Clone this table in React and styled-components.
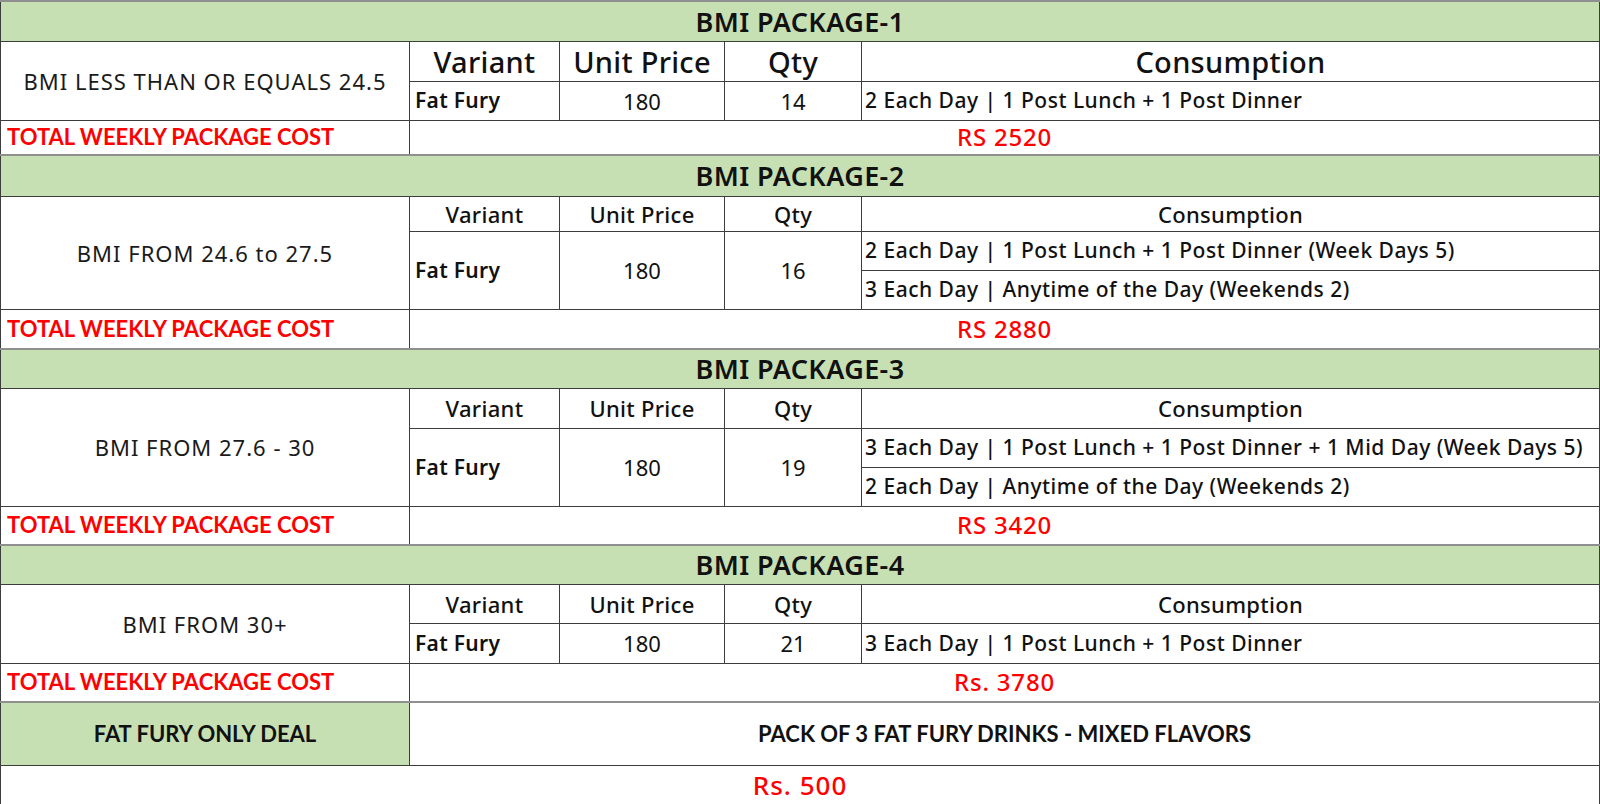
import styled, { createGlobalStyle } from "styled-components";

const GlobalStyle = createGlobalStyle`
  html, body {
    margin: 0;
    padding: 0;
    background: #fff;
  }
`;

const packages = [
  {
    title: "BMI PACKAGE-1",
    range: "BMI LESS THAN OR EQUALS 24.5",
    qty: 14,
    big: true,
    consumption: ["2 Each Day | 1 Post Lunch + 1 Post Dinner"],
    total: "RS 2520",
    heights: [40, 40, 39, 35],
  },
  {
    title: "BMI PACKAGE-2",
    range: "BMI FROM 24.6 to 27.5",
    qty: 16,
    consumption: [
      "2 Each Day | 1 Post Lunch + 1 Post Dinner (Week Days 5)",
      "3 Each Day | Anytime of the Day (Weekends 2)",
    ],
    total: "RS 2880",
    heights: [41, 35, 39, 40],
  },
  {
    title: "BMI PACKAGE-3",
    range: "BMI FROM 27.6 - 30",
    qty: 19,
    consumption: [
      "3 Each Day | 1 Post Lunch + 1 Post Dinner + 1 Mid Day (Week Days 5)",
      "2 Each Day | Anytime of the Day (Weekends 2)",
    ],
    total: "RS 3420",
    heights: [39, 40, 39, 39],
  },
  {
    title: "BMI PACKAGE-4",
    range: "BMI FROM 30+",
    qty: 21,
    consumption: ["3 Each Day | 1 Post Lunch + 1 Post Dinner"],
    total: "Rs. 3780",
    heights: [39, 39, 40, 39],
  },
];

function Package({ pkg }) {
  const [titleH, headH, rowH, totalH] = pkg.heights;
  const span = pkg.consumption.length;

  return (
    <>
      <Row $h={titleH}>
        <TitleCell colSpan={5}>{pkg.title}</TitleCell>
      </Row>
      <Row $h={headH}>
        <RangeCell rowSpan={span + 1}>{pkg.range}</RangeCell>
        <HeadCell $big={pkg.big}>Variant</HeadCell>
        <HeadCell $big={pkg.big}>Unit Price</HeadCell>
        <HeadCell $big={pkg.big}>Qty</HeadCell>
        <HeadCell $big={pkg.big}>Consumption</HeadCell>
      </Row>
      {pkg.consumption.map((line, i) => (
        <Row key={line} $h={rowH}>
          {i === 0 && (
            <>
              <VariantCell rowSpan={span}>Fat Fury</VariantCell>
              <NumberCell rowSpan={span}>180</NumberCell>
              <NumberCell rowSpan={span}>{pkg.qty}</NumberCell>
            </>
          )}
          <ConsumptionCell>{line}</ConsumptionCell>
        </Row>
      ))}
      <Row $h={totalH}>
        <TotalLabel>TOTAL WEEKLY PACKAGE COST</TotalLabel>
        <TotalValue colSpan={4}>{pkg.total}</TotalValue>
      </Row>
    </>
  );
}

export default function App() {
  return (
    <>
      <GlobalStyle />
      <Sheet>
        <colgroup>
          <col style={{ width: 409 }} />
          <col style={{ width: 150 }} />
          <col style={{ width: 165 }} />
          <col style={{ width: 137 }} />
          <col />
        </colgroup>
        <tbody>
          {packages.map((pkg) => (
            <Package key={pkg.title} pkg={pkg} />
          ))}
          <Row $h={63}>
            <DealLabel>FAT FURY ONLY DEAL</DealLabel>
            <DealText colSpan={4}>PACK OF 3 FAT FURY DRINKS - MIXED FLAVORS</DealText>
          </Row>
          <Row $h={39}>
            <DealPrice colSpan={5}>Rs. 500</DealPrice>
          </Row>
        </tbody>
      </Sheet>
    </>
  );
}

const Sheet = styled.table`
  width: 1600px;
  border-collapse: collapse;
  table-layout: fixed;
  font-family: "Noto Sans", "Open Sans", sans-serif;
  color: #111;
`;

const Row = styled.tr`
  height: ${(p) => p.$h}px;
`;

const Cell = styled.td`
  border: 1px solid #3d3d3d;
  padding: 0 5px;
  vertical-align: middle;
  white-space: nowrap;
  overflow: hidden;
  line-height: 1;
`;

const TitleCell = styled(Cell)`
  background: #c6e0b4;
  text-align: center;
  font-size: 27px;
  font-weight: 600;
  letter-spacing: 0.4px;
  border-top: 2px solid #8f8f8f;
`;

const RangeCell = styled(Cell)`
  text-align: center;
  font-size: 22px;
  font-weight: 400;
  letter-spacing: 1px;
  color: #1a1a1a;
`;

const HeadCell = styled(Cell)`
  text-align: center;
  font-size: ${(p) => (p.$big ? "29px" : "22px")};
  font-weight: 500;
  letter-spacing: 0.3px;
`;

const VariantCell = styled(Cell)`
  font-size: 21px;
  font-weight: 600;
  letter-spacing: 0.3px;
`;

const NumberCell = styled(Cell)`
  text-align: center;
  font-size: 22px;
  font-weight: 400;
`;

const ConsumptionCell = styled(Cell)`
  padding-left: 3px;
  font-size: 21px;
  font-weight: 500;
  letter-spacing: 0.5px;
`;

const TotalLabel = styled(Cell)`
  color: #ff0000;
  font-family: "Lato", "Liberation Sans", sans-serif;
  font-weight: 700;
  font-size: 22px;
  padding-left: 6px;
`;

const TotalValue = styled(Cell)`
  color: #ff0000;
  text-align: center;
  font-size: 24px;
  font-weight: 500;
  letter-spacing: 0.8px;
`;

const DealLabel = styled(Cell)`
  background: #c6e0b4;
  text-align: center;
  font-family: "Lato", "Liberation Sans", sans-serif;
  font-weight: 700;
  font-size: 22px;
  border-top: 2px solid #8f8f8f;
`;

const DealText = styled(Cell)`
  text-align: center;
  font-family: "Lato", "Liberation Sans", sans-serif;
  font-weight: 700;
  font-size: 22px;
  border-top: 2px solid #8f8f8f;
`;

const DealPrice = styled(Cell)`
  color: #ff0000;
  text-align: center;
  font-size: 26px;
  font-weight: 500;
  letter-spacing: 1px;
  border-top: 1px solid #111;
  border-bottom: 1px solid #111;
`;
